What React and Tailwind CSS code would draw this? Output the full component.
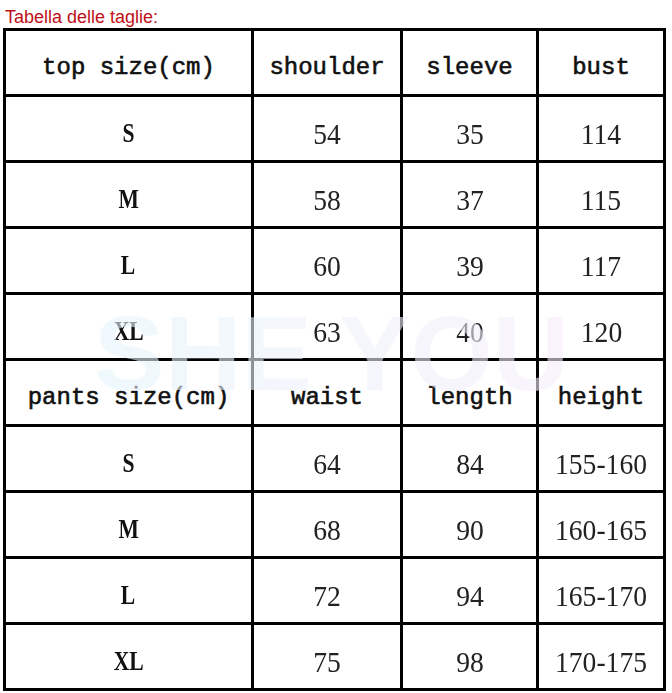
import React from "react";

const rows = [
  { h: true, c: ["top size(cm)", "shoulder", "sleeve", "bust"] },
  { c: ["S", "54", "35", "114"] },
  { c: ["M", "58", "37", "115"] },
  { c: ["L", "60", "39", "117"] },
  { c: ["XL", "63", "40", "120"] },
  { h: true, c: ["pants size(cm)", "waist", "length", "height"] },
  { c: ["S", "64", "84", "155-160"] },
  { c: ["M", "68", "90", "160-165"] },
  { c: ["L", "72", "94", "165-170"] },
  { c: ["XL", "75", "98", "170-175"] },
];

const mono = "font-['Liberation_Mono','Courier_New',monospace]";
const serif = "font-['Liberation_Serif','Times_New_Roman',serif]";

function Cell({ header, first, text }) {
  if (header) {
    return (
      <div className={`bg-white flex items-center justify-center pt-[10px] text-[24px] text-[#111] [-webkit-text-stroke:0.6px_#111] ${mono}`}>
        {text}
      </div>
    );
  }
  if (first) {
    return (
      <div className={`bg-white flex items-center justify-center pt-[10px] text-[27px] font-bold text-[#111] ${serif}`}>
        <span className="inline-block scale-x-[0.8]">{text}</span>
      </div>
    );
  }
  return (
    <div className={`bg-white flex items-center justify-center pt-[10px] text-[30px] text-[#222] ${serif}`}>
      <span className="inline-block scale-x-[0.92] whitespace-nowrap">{text}</span>
    </div>
  );
}

export default function App() {
  return (
    <div className="w-[672px] h-[693px] bg-white relative overflow-hidden">
      <div className="h-[28px] pt-[7px] pl-[5px] leading-[20px] text-[18px] text-[#c0101a] font-['Liberation_Sans',Arial,sans-serif]">
        Tabella delle taglie:
      </div>
      <div className="ml-[3px] w-[663px] bg-black p-[3px] grid grid-cols-[245px_146px_133px_124px] auto-rows-[63px] gap-[3px]">
        {rows.map((r, i) =>
          r.c.map((t, j) => (
            <Cell key={i + "-" + j} header={r.h} first={j === 0} text={t} />
          ))
        )}
      </div>
      <div className="absolute left-[94px] top-[300px] whitespace-nowrap text-[106px] leading-none font-bold pointer-events-none bg-gradient-to-r from-[#e6f6fc] via-[#eef2fb] to-[#f7eefb] bg-clip-text text-transparent opacity-60 font-['Liberation_Sans',Arial,sans-serif]">
        SHE YOU
      </div>
    </div>
  );
}
